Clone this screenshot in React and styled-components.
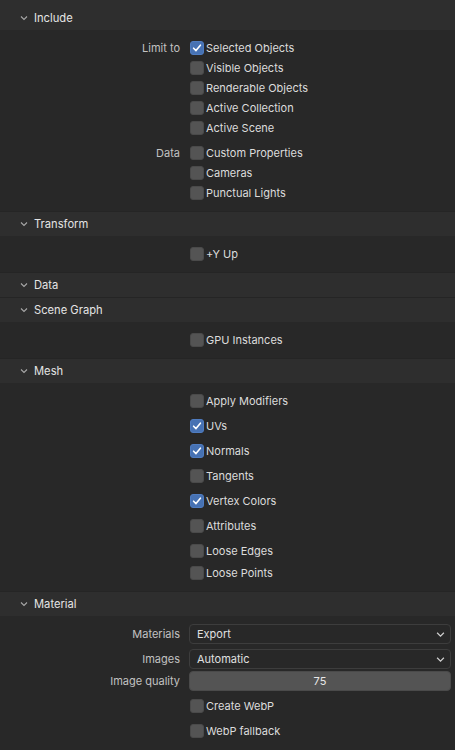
import React from "react";
import styled, { createGlobalStyle } from "styled-components";

const Global = createGlobalStyle`
  html, body { margin: 0; padding: 0; background: #1d1d1d; }
  body { font-family: Inter, "Noto Sans", "DejaVu Sans", sans-serif; font-size: 11px; }
`;

const Page = styled.div`
  width: 455px;
  height: 750px;
  overflow: hidden;
  background: #282828;
  display: flex;
  flex-direction: column;
`;

const Panel = styled.div`
  display: flex;
  flex-direction: column;
`;

const Header = styled.div`
  height: ${(p) => (p.first ? 30 : 25)}px;
  padding-top: ${(p) => (p.first ? 5 : 0)}px;
  box-sizing: border-box;
  background: #2e2e2e;
  border-top: 1px solid ${(p) => (p.first ? "#2e2e2e" : "#252525")};
  display: flex;
  align-items: center;
  gap: 6px;
  padding-left: 20px;
  color: #e4e4e4;
  font-size: 11.2px;
`;

const Body = styled.div`
  background: #282828;
  padding: 8px 4px 8px 0;
  display: flex;
  flex-direction: column;
  gap: ${(p) => p.gap ?? 0}px;
`;

const Row = styled.div`
  display: grid;
  grid-template-columns: 180px 1fr;
  column-gap: 9px;
  height: 20px;
  align-items: center;
  margin-top: ${(p) => p.mt ?? 0}px;
`;

const Label = styled.div`
  text-align: right;
  color: #c2c2c2;
`;

const Check = styled.div`
  display: flex;
  align-items: center;
  gap: 2px;
  color: #dcdcdc;
  padding-left: 1px;
`;

const Box = styled.div`
  width: 14px;
  height: 14px;
  border-radius: 3px;
  box-sizing: border-box;
  background: ${(p) => (p.on ? "#4772b3" : "#545454")};
  border: 1px solid ${(p) => (p.on ? "#4f7cc0" : "#4a4a4a")};
  display: flex;
  align-items: center;
  justify-content: center;
`;

const Select = styled.div`
  height: 20px;
  box-sizing: border-box;
  border: 1px solid #3d3d3d;
  border-radius: 4px;
  background: #282828;
  display: flex;
  align-items: center;
  justify-content: space-between;
  padding: 0 5px 0 7px;
  color: #e0e0e0;
`;

const Slider = styled.div`
  height: 20px;
  box-sizing: border-box;
  border-radius: 4px;
  background: #545454;
  border: 1px solid #4a4a4a;
  display: flex;
  align-items: center;
  justify-content: center;
  color: #e8e8e8;
`;

const Chevron = ({ size = 8, color = "#a8a8a8" }) => (
  <svg width={size} height={size} viewBox="0 0 8 8">
    <path d="M1 2.5 L4 5.5 L7 2.5" fill="none" stroke={color} strokeWidth="1.1" />
  </svg>
);

const Tick = () => (
  <svg width="10" height="10" viewBox="0 0 10 10">
    <path d="M1.6 5.2 L4 7.6 L8.4 2.2" fill="none" stroke="#fff" strokeWidth="1.6" strokeLinecap="round" strokeLinejoin="round" />
  </svg>
);

const CheckRow = ({ label, text, on, mt }) => (
  <Row mt={mt}>
    <Label>{label}</Label>
    <Check>
      <Box on={on}>{on && <Tick />}</Box>
      {text}
    </Check>
  </Row>
);

const PanelHead = ({ title, first }) => (
  <Header first={first}>
    <Chevron />
    {title}
  </Header>
);

export default function App() {
  return (
    <Page>
      <Global />
      <Panel>
        <PanelHead title="Include" first />
        <Body>
          <CheckRow label="Limit to" text="Selected Objects" on />
          <CheckRow text="Visible Objects" />
          <CheckRow text="Renderable Objects" />
          <CheckRow text="Active Collection" />
          <CheckRow text="Active Scene" />
          <CheckRow label="Data" text="Custom Properties" mt={5} />
          <CheckRow text="Cameras" />
          <CheckRow text="Punctual Lights" />
        </Body>
      </Panel>
      <Panel>
        <PanelHead title="Transform" />
        <Body>
          <CheckRow text="+Y Up" />
        </Body>
      </Panel>
      <Panel>
        <PanelHead title="Data" />
      </Panel>
      <Panel>
        <PanelHead title="Scene Graph" />
        <Body>
          <CheckRow text="GPU Instances" />
        </Body>
      </Panel>
      <Panel>
        <PanelHead title="Mesh" />
        <Body gap={5}>
          <CheckRow text="Apply Modifiers" />
          <CheckRow text="UVs" on />
          <CheckRow text="Normals" on />
          <CheckRow text="Tangents" />
          <CheckRow text="Vertex Colors" on />
          <CheckRow text="Attributes" />
          <CheckRow text="Loose Edges" />
          <CheckRow text="Loose Points" mt={-3} />
        </Body>
      </Panel>
      <Panel>
        <PanelHead title="Material" />
        <Body gap={5}>
          <Row>
            <Label>Materials</Label>
            <Select>Export<Chevron size={9} color="#cfcfcf" /></Select>
          </Row>
          <Row>
            <Label>Images</Label>
            <Select>Automatic<Chevron size={9} color="#cfcfcf" /></Select>
          </Row>
          <Row mt={-3}>
            <Label>Image quality</Label>
            <Slider>75</Slider>
          </Row>
          <CheckRow text="Create WebP" />
          <CheckRow text="WebP fallback" />
        </Body>
      </Panel>
    </Page>
  );
}
